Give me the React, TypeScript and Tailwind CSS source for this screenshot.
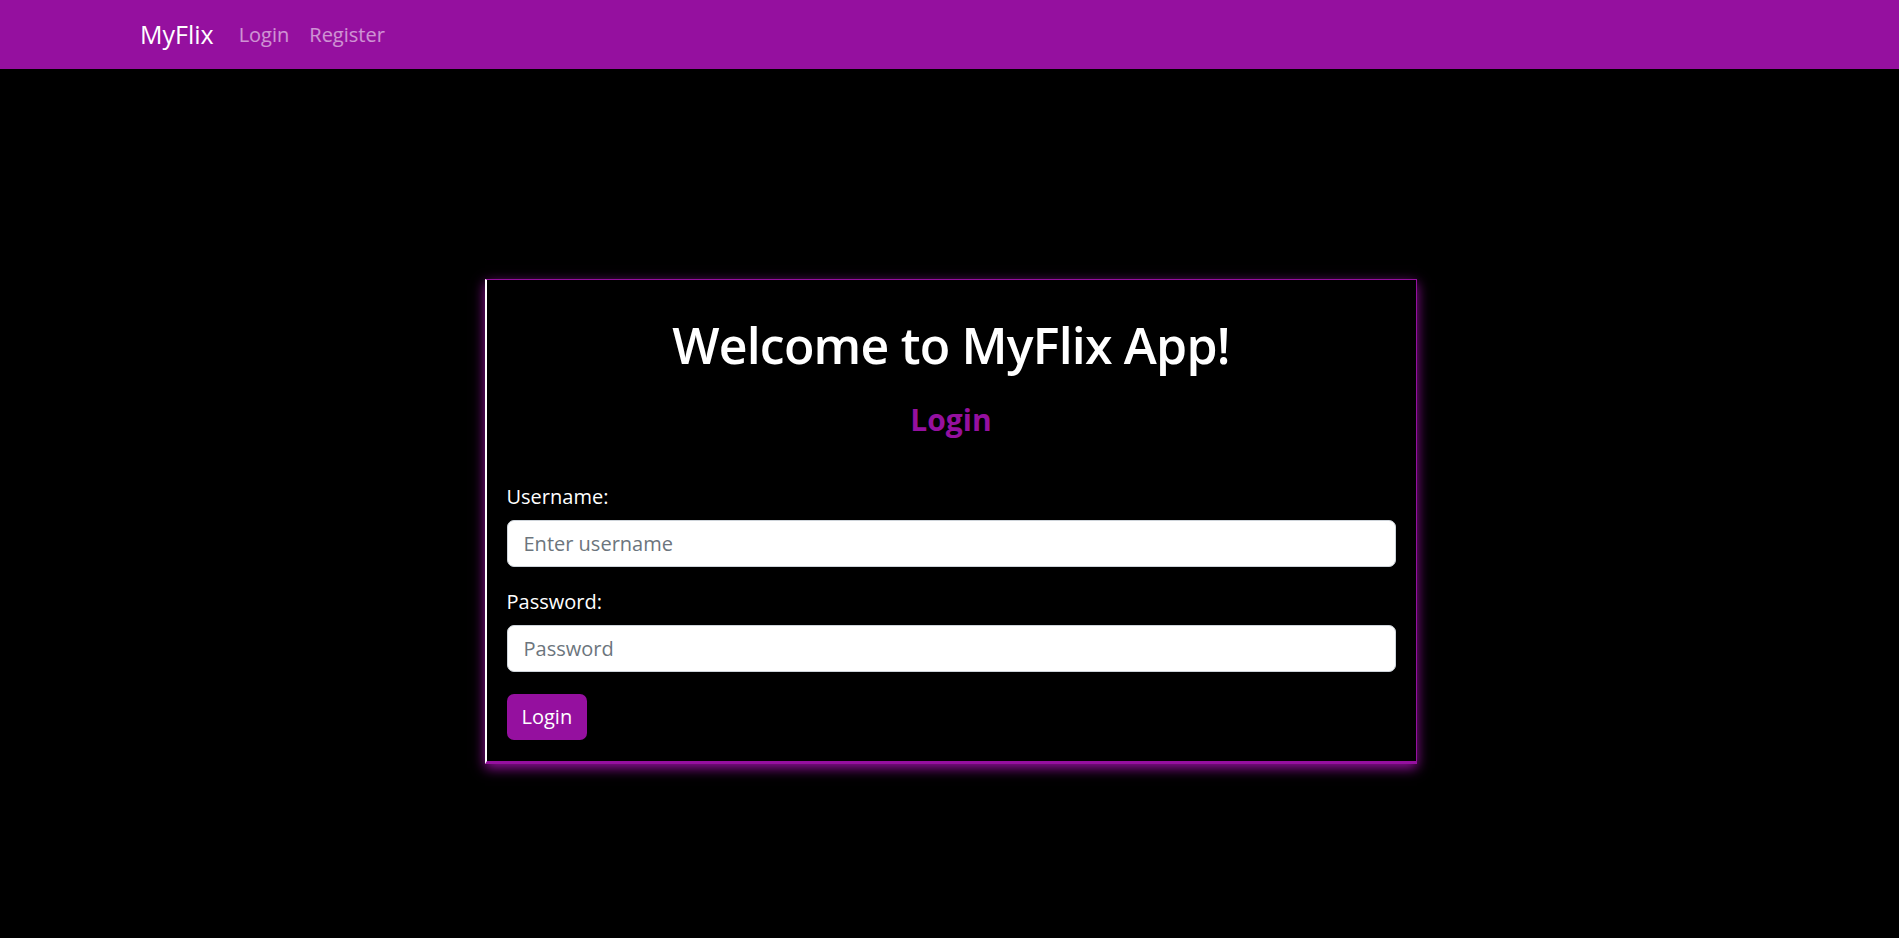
import React, { useState } from 'react';

const font = { fontFamily: '"Segoe UI", "Open Sans", "Noto Sans", sans-serif' };

function NavBar() {
  return (
    <nav className="h-[69px] bg-[#95109f] flex items-center pl-[140px]">
      <a href="#" className="text-[25px] text-white mr-[25px] leading-none">MyFlix</a>
      <a href="#" className="text-[20px] text-white/55 mr-[20px] leading-none">Login</a>
      <a href="#" className="text-[20px] text-white/55 leading-none">Register</a>
    </nav>
  );
}

function LoginCard() {
  const [username, setUsername] = useState('');
  const [password, setPassword] = useState('');

  return (
    <div className="w-[932px] bg-black border border-[#95109f] border-l-2 border-l-white border-b-[3px] shadow-[0_4px_12px_#95109f] px-[20px] pt-[35px] pb-[21px]">
      <h1 className="text-[50px] leading-[60px] text-white text-center font-semibold tracking-[-0.8px] mb-[27px]">
        Welcome to MyFlix App!
      </h1>
      <h4 className="text-[30px] leading-[36px] text-[#95109f] text-center font-bold mb-[44px]">Login</h4>
      <form onSubmit={(e) => e.preventDefault()}>
        <label className="block text-[20px] leading-[30px] text-white mb-[8px]">Username:</label>
        <input
          type="text"
          value={username}
          onChange={(e) => setUsername(e.target.value)}
          placeholder="Enter username"
          className="w-full h-[47px] bg-white rounded-[7px] border border-[#ced4da] px-[16px] text-[20px] text-[#212529] placeholder:text-[#6c757d] outline-none"
        />
        <label className="block text-[20px] leading-[30px] text-white mt-[20px] mb-[8px]">Password:</label>
        <input
          type="password"
          value={password}
          onChange={(e) => setPassword(e.target.value)}
          placeholder="Password"
          className="w-full h-[47px] bg-white rounded-[7px] border border-[#ced4da] px-[16px] text-[20px] text-[#212529] placeholder:text-[#6c757d] outline-none"
        />
        <button
          type="submit"
          className="mt-[22px] h-[46px] px-[15px] rounded-[7px] bg-[#95109f] text-white text-[20px] leading-none"
        >
          Login
        </button>
      </form>
    </div>
  );
}

export default function App() {
  return (
    <div className="min-h-[938px] bg-black" style={font}>
      <NavBar />
      <div className="flex justify-center pt-[210px] pl-[2px]">
        <LoginCard />
      </div>
    </div>
  );
}
